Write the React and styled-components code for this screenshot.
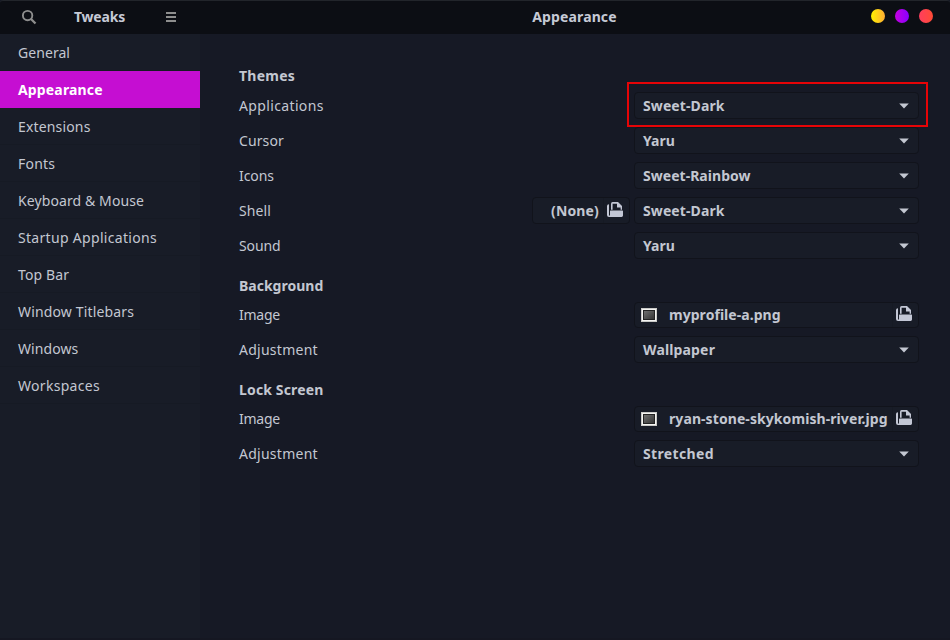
import React from "react";
import styled, { createGlobalStyle, css } from "styled-components";

const GlobalStyle = createGlobalStyle`
  * { box-sizing: border-box; }
  body { margin: 0; background: #161925; }
`;

const Window = styled.div`
  display: flex;
  flex-direction: column;
  width: 950px;
  height: 640px;
  overflow: hidden;
  background: #161925;
  color: #c3c7d1;
  font-family: "Noto Sans", "Open Sans", sans-serif;
  font-size: 14px;
  line-height: 19px;
`;

const HeaderBar = styled.header`
  display: grid;
  grid-template-columns: 200px 1fr;
  flex: none;
  height: 34px;
  padding-bottom: 1px;
  border-top: 1px solid #22252b;
  background: #0c0e14;
  border-top-left-radius: 3px;
  border-top-right-radius: 3px;
`;

const SideHeader = styled.div`
  display: grid;
  grid-template-columns: 58px 83px 59px;
  align-items: center;
  justify-items: center;
  color: #8e8e8e;
`;

const MainHeader = styled.div`
  display: grid;
  grid-template-columns: 1fr auto 1fr;
  align-items: center;
  padding-right: 1px;
`;

const Title = styled.h1`
  margin: 0;
  padding-bottom: 1px;
  color: #c6cad6;
  font-size: 14px;
  font-weight: 700;
  white-space: nowrap;
  letter-spacing: ${(p) => p.$track || 0}px;
`;

const WindowButtons = styled.div`
  display: flex;
  justify-content: flex-end;
  gap: 10px;
  padding: 0 16px 2px 0;
`;

const WindowButton = styled.span`
  width: 14px;
  height: 14px;
  border-radius: 50%;
  background: linear-gradient(90deg, ${(p) => p.$from}, ${(p) => p.$to});
`;

const Body = styled.div`
  display: flex;
  flex: 1;
`;

const Sidebar = styled.nav`
  flex: none;
  width: 200px;
  background: #181c27;
  border-bottom: 2px solid #151722;
`;

const NavItem = styled.div`
  display: flex;
  align-items: center;
  height: 37px;
  padding: 0 18px;
  border-bottom: 1px solid #161a24;
  white-space: nowrap;
  letter-spacing: ${(p) => p.$track || 0}px;
  ${(p) =>
    p.$active &&
    css`
      background: #c50ed2;
      border-color: #c50ed2;
      color: #ffffff;
      font-weight: 700;
    `}
`;

const Content = styled.main`
  flex: 1;
  padding: 33px 31px 0 39px;
  border-bottom: 2px solid #151722;
`;

const Section = styled.section`
  display: flex;
  flex-direction: column;
  gap: 8px;
  margin-bottom: 18px;
`;

const SectionTitle = styled.h2`
  margin: 0;
  height: 17px;
  font-size: 14px;
  line-height: 17px;
  font-weight: 700;
  letter-spacing: ${(p) => p.$track || 0}px;
`;

const Row = styled.div`
  display: flex;
  align-items: center;
  gap: 4px;
`;

const Label = styled.span`
  flex: 1;
  letter-spacing: ${(p) => p.$track || 0}px;
  padding-bottom: ${(p) => (p.$raised ? 2 : 0)}px;
`;

const Control = styled.div`
  display: flex;
  align-items: center;
  flex: none;
  width: ${(p) => p.$width || 285}px;
  height: ${(p) => p.$height || 27}px;
  padding: 0 8px;
  border: 1px solid #11131b;
  border-radius: 4px;
  background: #181c27;
  font-weight: 700;
  white-space: nowrap;
`;

const Highlight = styled.div`
  position: relative;
  display: flex;

  &::after {
    content: "";
    position: absolute;
    inset: -10px -9px -8px -7px;
    border: 2px solid #e60407;
    pointer-events: none;
  }
`;

const Value = styled.span`
  flex: 1;
  text-align: ${(p) => p.$align || "left"};
  letter-spacing: ${(p) => p.$track || 0}px;
`;

const FileControl = styled(Control)`
  padding: 0 6px;
`;

const FileValue = styled(Value)`
  padding-left: ${(p) => (p.$align ? 0 : 12)}px;
  padding-right: ${(p) => (p.$align ? 4 : 0)}px;
  padding-bottom: ${(p) => (p.$align ? 0 : 2)}px;
`;

const OpenSlot = styled.span`
  display: flex;
  justify-content: flex-end;
  align-self: stretch;
  align-items: center;
  width: 20px;
  border-left: 1px solid #161a24;
  padding-bottom: 3px;
`;

const Icon = styled.svg`
  display: block;
  flex: none;
`;

const SearchIcon = () => (
  <Icon width="16" height="16" viewBox="0 0 16 16" fill="none" stroke="currentColor" strokeWidth="1.9">
    <circle cx="6.6" cy="6.6" r="4.7" />
    <path d="M10 10 L14.5 14.5" strokeWidth="2.3" />
  </Icon>
);

const MenuIcon = () => (
  <Icon width="10" height="10" viewBox="0 0 10 10" fill="currentColor">
    <path d="M0 0h10v2H0zM0 4h10v2H0zM0 8h10v2H0z" />
  </Icon>
);

const ArrowIcon = () => (
  <Icon width="11" height="6" viewBox="0 0 11 6" fill="#c3c7d1">
    <path d="M0.2 0.5h9.6L5 5.6z" />
  </Icon>
);

const OpenIcon = () => (
  <Icon width="16" height="15" viewBox="0 0 16 15" fill="#c3c7d5">
    <path d="M3 9 Q3 8.5 3.6 8.5 H15.4 Q16 8.5 16 9.2 V13.6 Q16 15 14.6 15 H2 Q0 15 0 13 V4 Q0 2.2 2 2.2 V13.4 H3z" />
    <path d="M4 7.8 V2 Q4 0 5.6 0 H11 L15 4 V7.8 H13.6 V5.4 H10 V1.8 H5.6 V7.8z" />
  </Icon>
);

const PictureIcon = () => (
  <Icon width="16" height="14" viewBox="0 0 16 14">
    <defs>
      <linearGradient id="photo" x1="0" y1="0" x2="1" y2="1">
        <stop offset="0" stopColor="#707070" />
        <stop offset="1" stopColor="#343434" />
      </linearGradient>
    </defs>
    <rect width="16" height="14" fill="#c9c9c7" />
    <rect x="1" y="1" width="14" height="12" fill="#f4f4f2" />
    <rect x="2" y="2" width="12" height="10" fill="#222" />
    <rect x="3" y="3" width="10" height="8" fill="url(#photo)" />
  </Icon>
);

const Select = ({ value, track }) => (
  <Control>
    <Value $track={track}>{value}</Value>
    <ArrowIcon />
  </Control>
);

const FileButton = ({ value, track }) => (
  <FileControl $height={26}>
    <PictureIcon />
    <FileValue $track={track}>{value}</FileValue>
    <OpenSlot>
      <OpenIcon />
    </OpenSlot>
  </FileControl>
);

const navItems = [
  { name: "General", track: 0.06 },
  { name: "Appearance", track: 0.15, active: true },
  { name: "Extensions", track: 0.16 },
  { name: "Fonts", track: 0.2 },
  { name: "Keyboard & Mouse", track: 0.1 },
  { name: "Startup Applications", track: 0.31 },
  { name: "Top Bar", track: 0.11 },
  { name: "Window Titlebars", track: 0.15 },
  { name: "Windows", track: 0.06 },
  { name: "Workspaces", track: 0.3 },
];

export default function App() {
  return (
    <>
      <GlobalStyle />
      <Window>
        <HeaderBar>
          <SideHeader>
            <SearchIcon />
            <Title $track={-0.2}>Tweaks</Title>
            <MenuIcon />
          </SideHeader>
          <MainHeader>
            <span />
            <Title $track={0.12}>Appearance</Title>
            <WindowButtons>
              <WindowButton $from="#fff000" $to="#ffad34" />
              <WindowButton $from="#c400e0" $to="#8a00ff" />
              <WindowButton $from="#ff3e5e" $to="#ff4b35" />
            </WindowButtons>
          </MainHeader>
        </HeaderBar>
        <Body>
          <Sidebar>
            {navItems.map((item) => (
              <NavItem key={item.name} $active={item.active} $track={item.track}>
                {item.name}
              </NavItem>
            ))}
          </Sidebar>
          <Content>
            <Section>
              <SectionTitle $track={0.24}>Themes</SectionTitle>
              <Row>
                <Label $track={0.36}>Applications</Label>
                <Highlight>
                  <Select value="Sweet-Dark" track={0.1} />
                </Highlight>
              </Row>
              <Row>
                <Label $track={0.1}>Cursor</Label>
                <Select value="Yaru" track={0.05} />
              </Row>
              <Row>
                <Label $track={-0.06}>Icons</Label>
                <Select value="Sweet-Rainbow" track={0.03} />
              </Row>
              <Row>
                <Label $track={0.11}>Shell</Label>
                <FileControl $width={98}>
                  <FileValue $align="right" $track={0.15}>(None)</FileValue>
                  <OpenSlot>
                    <OpenIcon />
                  </OpenSlot>
                </FileControl>
                <Select value="Sweet-Dark" track={0.1} />
              </Row>
              <Row>
                <Label $track={-0.1}>Sound</Label>
                <Select value="Yaru" track={0.05} />
              </Row>
            </Section>
            <Section>
              <SectionTitle>Background</SectionTitle>
              <Row>
                <Label $raised $track={-0.24}>Image</Label>
                <FileButton value="myprofile-a.png" track={0.04} />
              </Row>
              <Row>
                <Label $track={0.26}>Adjustment</Label>
                <Select value="Wallpaper" track={0.15} />
              </Row>
            </Section>
            <Section>
              <SectionTitle $track={0.15}>Lock Screen</SectionTitle>
              <Row>
                <Label $raised $track={-0.24}>Image</Label>
                <FileButton value="ryan-stone-skykomish-river.jpg" track={0.08} />
              </Row>
              <Row>
                <Label $track={0.26}>Adjustment</Label>
                <Select value="Stretched" track={0.36} />
              </Row>
            </Section>
          </Content>
        </Body>
      </Window>
    </>
  );
}
